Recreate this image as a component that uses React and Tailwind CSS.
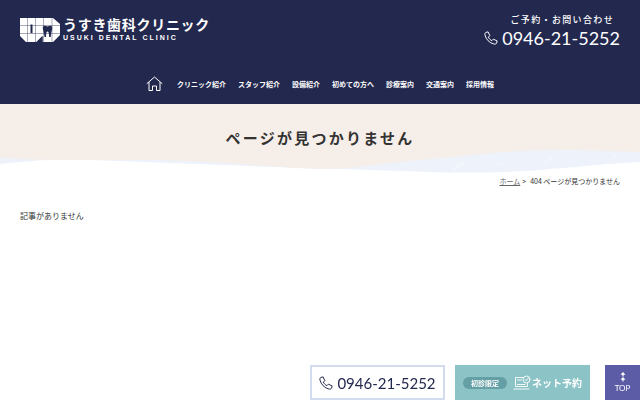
import React from 'react';

const TEL = '0946-21-5252';

const NAV_ITEMS = [
  { label: 'クリニック紹介', href: '#clinic' },
  { label: 'スタッフ紹介', href: '#staff' },
  { label: '設備紹介', href: '#equipment' },
  { label: '初めての方へ', href: '#first' },
  { label: '診療案内', href: '#medical' },
  { label: '交通案内', href: '#access' },
  { label: '採用情報', href: '#recruit' },
];

export default function App() {
  return (
    <div className="min-h-screen bg-white text-[#333] font-['Noto_Sans_CJK_JP',sans-serif]">
      <Header />
      <main>
        <PageTitle />
        <Breadcrumb />
        <p className="px-5 mt-5 text-[8px] leading-5">記事がありません</p>
      </main>
      <FloatingMenu />
    </div>
  );
}

/* ── Header ── */
function Header() {
  return (
    <header className="bg-[#23284f] text-white py-3">
      <div className="flex items-start justify-between px-5">
        <a href="#home" className="flex items-center gap-[3px] pt-1">
          <LogoMark />
          <span className="flex flex-col">
            <span className="text-sm leading-4 font-bold tracking-wider">うすき歯科クリニック</span>
            <span className="text-[7px] leading-3 font-bold tracking-[2px] font-['Liberation_Sans',sans-serif]">
              USUKI DENTAL CLINIC
            </span>
          </span>
        </a>
        <div className="flex flex-col items-end">
          <p className="text-[9px] leading-4 font-medium tracking-[0.15em] pr-1.5">ご予約・お問い合わせ</p>
          <a href="tel:0946215252" className="flex items-center gap-1 text-lg leading-5 font-['Lato',sans-serif]">
            <PhoneIcon className="w-3.5 h-3.5" />
            {TEL}
          </a>
        </div>
      </div>

      <nav aria-label="メインメニュー" className="mt-7">
        <ul className="flex items-center justify-center gap-3">
          <li className="mr-0.5">
            <a href="#home" aria-label="ホーム" className="block">
              <HomeIcon />
            </a>
          </li>
          {NAV_ITEMS.map(item => (
            <li key={item.href}>
              <a href={item.href} className="block text-[7px] leading-4 font-bold hover:opacity-70">
                {item.label}
              </a>
            </li>
          ))}
        </ul>
      </nav>
    </header>
  );
}

/* ── Page title with wave ── */
function PageTitle() {
  return (
    <div className="relative pt-6 pb-7">
      <svg
        className="absolute inset-0 w-full h-full"
        viewBox="0 0 640 72"
        preserveAspectRatio="none"
        aria-hidden="true"
      >
        <path
          d="M0 50H325L640 40V58C600 60 580 63 550 65C510 69 460 69 430 68C390 67 360 65 325 65L65 55C40 56 20 58 0 60Z"
          fill="#edf2fb"
        />
        <path
          d="M0 0H640V48C600 47 580 46 560 46C500 46 450 54 400 58C370 61 350 65 325 65C270 64 220 56 140 56H65C40 56 20 55 0 54Z"
          fill="#f6eee8"
        />
        <path
          d="M454 66l8-8M460 64l4-5M545 59l7-6M612 55l5-5M500 61l3-2"
          stroke="#fff"
          strokeWidth="1"
          strokeLinecap="round"
          opacity="0.7"
        />
      </svg>
      <h1 className="relative text-center text-[15px] leading-5 font-bold tracking-[0.15em]">
        ページが見つかりません
      </h1>
    </div>
  );
}

/* ── Breadcrumb ── */
function Breadcrumb() {
  return (
    <nav aria-label="パンくずリスト" className="px-5">
      <ol className="flex justify-end gap-1 text-[7px] leading-[10px]">
        <li>
          <a href="#home" className="underline text-[#666]">ホーム</a>
          <span className="ml-0.5">&gt;</span>
        </li>
        <li>404 ページが見つかりません</li>
      </ol>
    </nav>
  );
}

/* ── Fixed menu at the bottom ── */
function FloatingMenu() {
  return (
    <div className="fixed bottom-0 right-0 flex h-[35px]">
      <a
        href="tel:0946215252"
        className="flex items-center justify-center gap-1 w-[135px] bg-white border-2 border-[#d3dcee] text-[#23284f] text-[15px] leading-5 font-['Lato',sans-serif]"
      >
        <PhoneIcon className="w-3.5 h-3.5" />
        {TEL}
      </a>
      <a
        href="#reserve"
        className="flex items-center justify-center w-[135px] ml-2.5 bg-[#8bc3c6] text-white font-bold"
      >
        <span className="rounded-full bg-[#649fa5] px-2 text-[7px] leading-3">初診限定</span>
        <ReserveIcon />
        <span className="text-[10px] leading-4">ネット予約</span>
      </a>
      <a
        href="#top"
        className="flex flex-col items-center justify-center w-[35px] ml-[15px] bg-[#5c5ba6] text-white text-[8px] leading-3 font-['Lato',sans-serif]"
      >
        <svg width="6" height="10" viewBox="0 0 6 10" fill="currentColor" aria-hidden="true">
          <path d="M3 0l2.500 2.800H3.600V4.500H2.400V2.800H.5zM3 5l2.500 2.800H3.600V9.500H2.400V7.800H.5z" />
        </svg>
        TOP
      </a>
    </div>
  );
}

/* ── Icons ── */
function LogoMark() {
  return (
    <svg width="40" height="24" viewBox="0 0 40 24" aria-hidden="true">
      <path d="M0 0H33L40 6V17L33 24H22.500V18L16.500 24H6L0 18Z" fill="#fff" />
      {/* tile joints */}
      <path
        d="M7.500 0V24M15.500 0V24M23.500 0V24M32 0V24M0 7.500H40M0 15.500H40"
        stroke="#23284f"
        strokeWidth="0.4"
        fill="none"
      />
      <path d="M10.500 6.500H12.500V15H10.500Z" fill="#23284f" />
      {/* tooth */}
      <path
        d="M23 8.500C24.500 7 26 8.500 27.500 8.500S30.500 7 32 8.500C33 11 31 13 30.800 19H29.200C29 15 28.500 13.500 27.500 13.500S26.200 15 26 19H24.500C24.300 13 22 11 23 8.500Z"
        fill="#23284f"
      />
      <path d="M16.500 24L22.500 18V24Z" fill="#23284f" />
    </svg>
  );
}

function PhoneIcon({ className }) {
  return (
    <svg
      className={className}
      viewBox="0 0 24 24"
      fill="none"
      stroke="currentColor"
      strokeWidth="1.7"
      strokeLinejoin="round"
      aria-hidden="true"
    >
      <path d="M3 2.500L7 1.500L10 8L7.500 10.500C8.500 13 11 15.500 13.500 16.500L16 14L22.500 17L21.500 21C20.500 22.500 19 22.700 17 22.300C9.500 20.500 3.500 14.500 1.700 7C1.300 5 1.500 3.500 3 2.500Z" />
    </svg>
  );
}

function HomeIcon() {
  return (
    <svg
      width="17"
      height="16"
      viewBox="0 0 17 16"
      fill="none"
      stroke="currentColor"
      strokeWidth="1"
      strokeLinejoin="round"
      strokeLinecap="round"
      aria-hidden="true"
    >
      <path d="M1 7.500L8.500 1L16 7.500" />
      <path d="M3 6.500V14.500H6.500V10H10.500V14.500H14V6.500" />
    </svg>
  );
}

function ReserveIcon() {
  return (
    <svg
      className="ml-1.5 mr-px"
      width="18"
      height="16"
      viewBox="0 0 18 16"
      fill="none"
      stroke="currentColor"
      strokeWidth="0.9"
      strokeLinejoin="round"
      strokeLinecap="round"
      aria-hidden="true"
    >
      <path d="M10 2.500H2.500V11.500H14.500V8.500" />
      <path d="M4.500 5H8.500M4.500 9.500H12M1 14H16" />
      <circle cx="13.500" cy="4.500" r="3.500" />
      <path d="M12 4.500L13.200 5.700L15.300 3.300" />
    </svg>
  );
}
